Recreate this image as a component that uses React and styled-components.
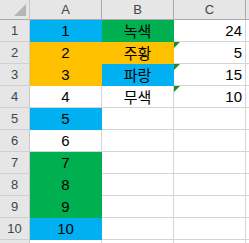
import React from "react"
import styled, { createGlobalStyle } from 'styled-components';

const GlobalStyle = createGlobalStyle`
    html, body { margin: 0; padding: 0; background: #fff; overflow: hidden; }
    * { box-sizing: border-box; }
`

const fills = {
    blue: '#00b0f0',
    orange: '#ffc000',
    green: '#00b050',
}

const rows = [
    { a: '1', aFill: 'blue', b: '녹색', bFill: 'green', c: '24' },
    { a: '2', aFill: 'orange', b: '주황', bFill: 'orange', c: '5', flag: true },
    { a: '3', aFill: 'orange', b: '파랑', bFill: 'blue', c: '15', flag: true },
    { a: '4', b: '무색', c: '10', flag: true },
    { a: '5', aFill: 'blue' },
    { a: '6' },
    { a: '7', aFill: 'green' },
    { a: '8', aFill: 'green' },
    { a: '9', aFill: 'green' },
    { a: '10', aFill: 'blue' },
    {},
]

export default function App() {
    return (
        <>
            <GlobalStyle />
            <Sheet>
                <Corner>
                    <svg width="14" height="14" viewBox="0 0 14 14">
                        <polygon points="13,1 13,13 1,13" fill="#b5b5b5" />
                    </svg>
                </Corner>
                <ColHead>A</ColHead>
                <ColHead>B</ColHead>
                <ColHead>C</ColHead>
                <ColHead $last />
                {rows.map((r, i) => (
                    <React.Fragment key={i}>
                        <RowHead>{i < 10 ? i + 1 : ''}</RowHead>
                        <Cell $fill={r.aFill} $align="center">{r.a}</Cell>
                        <Cell $fill={r.bFill} $align="center" $kr>{r.b}</Cell>
                        <Cell $align="right">
                            {r.flag && <Flag />}
                            {r.c}
                        </Cell>
                        <Cell $last />
                    </React.Fragment>
                ))}
            </Sheet>
        </>
    )
}

const Sheet = styled.div`
    display: grid;
    grid-template-columns: 30px 72px 72px 72px 1fr;
    grid-template-rows: 20px repeat(10, 22px) 22px;
    width: 249px;
    height: 243px;
    overflow: hidden;
    font-family: "Liberation Sans", Arial, sans-serif;
`

const Corner = styled.div`
    background: #e6e6e6;
    border-right: 1px solid #c8c8c8;
    border-bottom: 1px solid #ababab;
    display: flex;
    align-items: flex-start;
    justify-content: flex-end;
    padding: 3px 2px 0 0;
`

const ColHead = styled.div`
    background: #e6e6e6;
    border-right: 1px solid ${(p) => p.$last ? '#e6e6e6' : '#ababab'};
    border-bottom: 1px solid #ababab;
    color: #444;
    font-size: 13px;
    line-height: 19px;
    text-align: center;
`

const RowHead = styled.div`
    background: #e6e6e6;
    border-right: 1px solid #c8c8c8;
    border-bottom: 1px solid #d0d0d0;
    color: #444;
    font-size: 13px;
    line-height: 21px;
    text-align: center;
`

const Cell = styled.div`
    position: relative;
    background: ${(p) => p.$fill ? fills[p.$fill] : '#fff'};
    border-right: 1px solid ${(p) => p.$fill ? fills[p.$fill] : '#d4d4d4'};
    border-bottom: 1px solid ${(p) => p.$fill ? fills[p.$fill] : '#d4d4d4'};
    color: #000;
    font-size: ${(p) => p.$kr ? '15px' : '15px'};
    font-family: ${(p) => p.$kr ? '"Noto Sans CJK KR", sans-serif' : '"Liberation Sans", Arial, sans-serif'};
    line-height: 21px;
    text-align: ${(p) => p.$align || 'left'};
    padding: 0 3px;
    white-space: nowrap;
    ${(p) => p.$last && 'border-right: none;'}
`

const Flag = styled.span`
    position: absolute;
    top: 0;
    left: 0;
    width: 0;
    height: 0;
    border-top: 6px solid #1d8a2e;
    border-right: 6px solid transparent;
`
